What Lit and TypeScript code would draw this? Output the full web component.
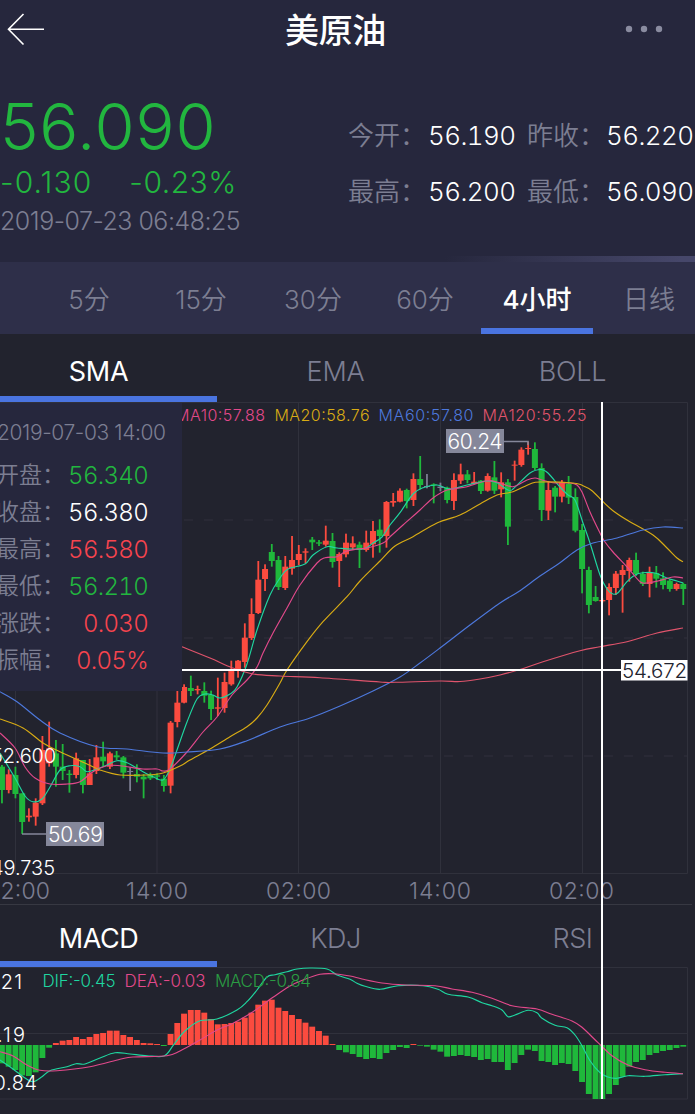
import { LitElement, html, svg, css } from "lit";
import { customElement, property } from "lit/decorators.js";
import { classMap } from "lit/directives/class-map.js";

const RED = "#fb4b3f";
const GREEN = "#1fb83b";
const GREY = "#7c7e92";
const TEAL = "#1fd6a0";
const PINK = "#e2498b";
const YELLOW = "#d9ac14";
const BLUE = "#4d78dc";
const ROSE = "#e0546c";

const STEP = 6.746;
const FIRST = 1.95;
const centre = (i: number) => FIRST + i * STEP;

// Each candle: colour, body top, body bottom, wick top, wick bottom, in thirds
// of a pixel below the run's own origin.
type Candle = [string, number, number, number, number];
const runs: { origin: number; rows: string }[] = [
  {
    origin: 670,
    rows: `g 290 360 285 400|r 313 360 298 370|g 315 372 290 385|g 370 456 370 492|r 437 442 415 455|r 398 440 385 467
|r 240 400 198 405|r 235 280 155 290|g 250 290 210 350|g 290 303 222 330|g 311 315 300 368|r 265 315 248 325
|g 270 345 270 370|r 310 345 267 345|r 262 303 225 312|g 260 274 215 288|r 250 290 245 297|g 256 262 243 270
|g 262 308 258 325|x 303 306 292 363|g 312 320 283 337|g 320 328 312 385|g 315 325 308 330|g 316 320 310 330
|g 326 348 315 365|r 158 347 153 370|r 98 156 62 172`,
  },
  {
    origin: 640,
    rows: `r 141 188 133 190|g 144 153 107 168|r 147 151 137 163|g 153 167 127 188|g 165 207 152 240|r 202 206 113 228
|r 126 204 98 218|r 90 133 62 137|r 62 93 60 113`,
  },
  {
    origin: 500,
    rows: `r 413 486 370 503|r 342 414 295 420|r 239 339 183 342|r 207 237 193 273|g 156 183 132 200|g 180 261 168 270
|r 200 264 168 270|r 180 206 108 224|r 162 180 135 195|r 154 158 145 190|g 119 127 111 150|g 127 131 120 138
|r 122 134 77 140|g 123 186 99 203|r 162 183 157 261|r 128 163 101 172|r 130 142 109 150|g 134 150 125 204
|r 128 150 92 155|r 93 133 63 173|g 89 108 58 158|r 6 108 3 143`,
  },
  {
    origin: 420,
    rows: `r 243 248 219 260|r 212 245 205 247|g 210 243 206 265|r 177 240 160 258|g 177 195 108 208|x 198 201 162 205
|g 193 196 190 250|x 200 204 188 214|g 203 240 200 250|r 180 243 160 270|r 163 182 131 192|g 163 180 150 190
|r 185 192 156 192|g 182 213 180 222|r 168 212 160 215|g 172 212 123 222|r 187 208 157 232|g 187 320 177 375
|r 134 137 122 182|r 89 135 82 140|r 84 87 65 104|g 87 144 67 150|g 144 270 130 303|r 210 272 183 300
|g 203 230 198 277|r 187 230 180 247|g 192 233 168 252|g 231 332 205 337|g 330 447 312 520|g 450 555 440 580
|g 531 543 498 545|r 540 544 535 548|r 501 540 490 586|r 461 504 453 525|r 450 465 435 578|r 420 453 413 485
|g 420 462 398 468|g 462 492 455 498|r 459 492 440 532|g 459 476 438 503|g 475 495 457 508|g 482 507 477 515
|r 492 507 488 512|g 492 507 488 555`,
  },
];
const candles: Candle[] = runs.flatMap(({ origin, rows }) =>
  rows.split("|").map((row) => {
    const [c, ...v] = row.trim().split(" ");
    return [c, ...v.map((n) => origin + Number(n) / 3)] as Candle;
  })
);

// Bar ends in thirds of a pixel below y = 900; 435 is the zero line.
const bars = [
  490, 500, 510, 526, 528, 517, 474, 443, 429, 422, 420, 411, 417, 411, 402, 399, 392, 392, 405, 411, 420, 429, 430,
  432, 438, 402, 369, 341, 330, 330, 338, 357, 373, 372, 369, 365, 353, 338, 314, 302, 299, 323, 333, 345, 357, 368,
  380, 393, 407, 432, 450, 457, 462, 471, 477, 474, 477, 459, 450, 441, 444, 432, 437, 440, 449, 455, 470, 468, 465,
  468, 471, 480, 477, 486, 486, 510, 489, 465, 449, 453, 483, 486, 495, 489, 492, 513, 546, 582, 597, 597, 582, 555,
  530, 500, 486, 480, 465, 459, 453, 450, 444, 440,
];

const ma5 = `0,753 15,778 25,796 33,801.7 42,799 50,787 60,770 70,765.7 80,766.7 87,771.7 97,769 107,765 117,760.7
127,762.7 140,770 153,776.7 163,780 170,769 177,750 187,722 197,699 205,694 213,695 220,698 230,694 237,687 247,664
257,630 270,595 280,578 288,569 305,564 313,555 327,546.7 337,548 363,549 373,543 382,537 390,525 400,512.7 413,494
423,487.7 437,485 450,489 467,485 487,481 497,482.7 508,490 513,489 530,473 541,469.5 548,473 560,487 568,495 575,500
583,523 590,543 600,575 607,589 613,594 618,592.7 627,581.7 635,575 643,572.7 655,573 667,578 677,581 683,583`;
const ma10 = `0,733 15,748 25,767 35,778 50,784 67,784 80,781.7 93,771.7 107,765.7 120,765.7 143,769 157,769 163,771
170,769 187,752 203,732 217,717 232,695 247,680 257,667 263,653 273,633 287,608 300,585 317,563 325,557.7 337,556.7
345,551.7 357,549 367,548 383,543 390,536.7 403,525 420,510 433,498 447,490 467,486.7 487,480.7 500,483 513,486.7
527,480 535,478 542,480 553,482.7 570,483 577,485 582,492 590,512 600,533 605,542 613,552 628,568 640,581.7 647,583
658,581 673,577 683,578`;
const ma20 = `0,719 23,728 43,743 60,751.7 87,764 100,770 120,775 147,775 163,773 180,766 190,760 210,749 230,736.7
247,726.7 257,718 267,705 280,683 287,670 307,641.7 323,621.7 347,596.7 360,581 380,561 395,546 413,536.7 437,523
460,515 480,504 497,495 513,491.7 530,484 540,482 573,483 583,485.7 592,490.7 603,501.7 613,510.7 627,520 653,535
667,548 677,558 683,561.7`;
const ma60 = `0,691.7 17,701.7 40,720 60,733 97,746.7 127,749 163,753 187,752 220,749 247,740.7 280,727 310,718 340,706
373,691 400,677 420,663 440,648 470,625 500,603 520,590.7 540,576 560,562.7 577,550 593,543 617,538 643,530 663,527
683,528`;
const ma120 = `182,646.7 210,658 232,667.7 253,674 280,676 320,677.7 380,682 395,682.3 440,681 460,681.5 480,679 500,675
520,669.5 543,661.7 580,650.7 600,646.7 627,641.7 657,633 683,628`;

const dif = `0,1060 13,1069 25,1078 33,1081.7 42,1076.7 50,1070.7 67,1066.7 76,1063.7 85,1064 100,1058 115,1052.7 130,1054
147,1055.7 164,1056 173,1045.7 182,1034 190,1026.7 200,1020.7 217,1019 237,1010 247,1001.7 257,990 267,977 275,974.7
287,971.7 297,969 310,968 327,969 337,975 350,979.3 357,983.3 365,986.3 380,989.3 398,985.7 423,985.7 438,989.3
448,994.3 468,997 482,1002.7 492,1005.7 502,1010 508,1016.7 515,1015 528,1010.3 537,1012.7 542,1018.3 555,1025.3
567,1027.7 575,1035 582,1045.7 590,1060.7 600,1072.7 607,1076.7 617,1078.3 628,1075.7 645,1076.3 665,1074.7
683,1073.7`;
const dea = `0,1051.7 13,1056 27,1065 40,1070.3 57,1070.7 90,1066.7 120,1059.3 133,1057 167,1055.7 180,1051 200,1040
217,1030 233,1023.3 253,1011.7 273,997.3 290,986 303,980 320,974.3 333,973.7 350,976 362,979 382,983 405,985 435,985.7
452,989 472,992.3 492,998.3 512,1005.7 537,1009 552,1014.3 572,1021 582,1027.3 598,1042.7 612,1055.7 628,1065
645,1069.7 665,1072.3 683,1073.7`;

/** Catmull-Rom path through the points. */
function curve(points: string): string {
  const p = points.trim().split(/\s+/).map((s) => s.split(",").map(Number));
  let d = `M${p[0][0]} ${p[0][1]}`;
  for (let i = 0; i < p.length - 1; i++) {
    const a = p[Math.max(i - 1, 0)], b = p[i], c = p[i + 1], e = p[Math.min(i + 2, p.length - 1)];
    d += `C${b[0] + (c[0] - a[0]) / 6} ${b[1] + (c[1] - a[1]) / 6} ${c[0] - (e[0] - b[0]) / 6} ${c[1] - (e[1] - b[1]) / 6} ${c[0]} ${c[1]}`;
  }
  return d;
}

const line = (points: string, color: string) =>
  svg`<path d=${curve(points)} fill="none" stroke=${color} stroke-width="1.15"/>`;

const label = (x: number, y: number, size: number, color: string, length: number, value: string) =>
  svg`<text x=${x} y=${y} font-size=${size} fill=${color} textLength=${length}>${value}</text>`;

const colorOf: Record<string, string> = { r: RED, g: GREEN, x: GREY };

@customElement("tab-strip")
class TabStrip extends LitElement {
  @property({ type: Array }) items: string[] = [];
  @property({ type: Number }) active = 0;

  static styles = css`
    :host { display: block; overflow: hidden; }
    .row { display: flex; height: 100%; margin-left: var(--inset, 0px); }
    .tab {
      flex: 0 0 var(--tab, 112px);
      display: flex;
      align-items: center;
      justify-content: center;
      box-sizing: border-box;
      padding-top: var(--drop, 5px);
      border-bottom: 6px solid transparent;
      font-size: var(--size, 26px);
      letter-spacing: var(--track, 0);
      color: #7c7e92;
      white-space: nowrap;
    }
    .on { color: #fff; font-weight: var(--on-weight, 400); border-bottom-color: #4a74e0; }
  `;

  render() {
    return html`<div class="row">
      ${this.items.map((t, i) => html`<div class=${classMap({ tab: true, on: i === this.active })}>${t}</div>`)}
    </div>`;
  }
}

@customElement("app-root")
class AppRoot extends LitElement {
  static styles = css`
    :host {
      display: block;
      position: relative;
      height: 1114px;
      overflow: hidden;
      background: #22232e;
      font-family: Inter, "Noto Sans CJK SC", sans-serif;
      font-weight: 350;
      color: #fff;
    }
    .head { background: #26273d; height: 262px; display: flex; flex-direction: column; }
    .bar { display: grid; grid-template-columns: 1fr auto 1fr; align-items: center; height: 60px; width: 671px; }
    .title { font-size: 34px; font-weight: 500; line-height: 58px; letter-spacing: -0.4px; padding-top: 2px; }
    .back { margin-left: 7px; }
    .more { justify-self: end; margin: 0 7px 1px 0; }
    .quote { display: flex; justify-content: space-between; width: 695px; height: 196px; }
    .last { display: flex; flex-direction: column; color: #22b63f; white-space: nowrap; padding-top: 31px; width: 260px; }
    .price { font-size: 65px; line-height: 72px; letter-spacing: 0.8px; font-weight: 300; }
    .change {
      display: flex;
      gap: 37px;
      font-size: 30px;
      line-height: 36px;
      padding-top: 1px;
      letter-spacing: 1.1px;
      font-weight: 300;
    }
    .change :last-child { letter-spacing: 0.5px; }
    .time { color: #7c7e92; font-size: 25px; line-height: 30px; padding-top: 6px; letter-spacing: -0.5px; }
    .stats {
      display: grid;
      grid-template-columns: 80px 99px 79px 88px;
      grid-auto-rows: 56px;
      align-items: center;
      padding: 47px 1px 0 0;
      font-size: 26px;
      color: #7c7e92;
      white-space: nowrap;
    }
    .stats span { padding-bottom: 4px; }
    .stats b { color: #fff; font-weight: 350; letter-spacing: -0.6px; font-variant-numeric: tabular-nums; }
    .sheen { height: 6px; background: linear-gradient(90deg, #26273d 64%, #46476a 98%); }
    .periods { height: 72px; background: #2e2f49; --inset: 33px; --tab: 112px; --on-weight: 500; --drop: 4px; }
    .overlays { height: 68px; --inset: -20px; --tab: 237px; --size: 27px; --drop: 12px; --track: -0.2px; }
    .subs { height: 62px; --inset: -20px; --tab: 237px; --size: 27px; --drop: 11px; --track: -0.5px; }
    svg { display: block; }
    .chart { flex: none; }
    .tip {
      position: absolute;
      left: 0;
      top: 403px;
      width: 182px;
      height: 288px;
      background: #26273d;
      color: #7c7e92;
      white-space: nowrap;
    }
    .when { font-size: 21px; line-height: 30px; margin: 15px 0 9px -3px; letter-spacing: -0.4px; }
    .fact { display: flex; justify-content: space-between; height: 37px; line-height: 37px; font-size: 23px; width: 152px; margin-left: -4px; }
    .num { font-size: 24px; letter-spacing: -0.7px; font-variant-numeric: tabular-nums; }
    .up { color: #f7444e; }
    .down { color: #22b63f; }
    .flat { color: #fff; }
    .cross { position: absolute; left: 0; top: 0; pointer-events: none; }
  `;

  private facts = [
    ["开盘", "56.340", "down"],
    ["收盘", "56.380", "flat"],
    ["最高", "56.580", "up"],
    ["最低", "56.210", "down"],
    ["涨跌", "0.030", "up"],
    ["振幅", "0.05%", "up"],
  ];

  private stats = [
    ["今开", "56.190"],
    ["昨收", "56.220"],
    ["最高", "56.200"],
    ["最低", "56.090"],
  ];

  private priceChart() {
    return html`<svg class="chart" width="695" height="503" viewBox="0 402 695 503">
      <g stroke="#30313c" fill="none">
        <path d="M0 402.5H687.5V873.5H0M15.5 402V873M157 402V873M298.5 402V873M440.5 402V873M582.5 402V873" />
        <path d="M4 520H687M4 638H687M4 756H687" stroke-dasharray="9 11" />
        <path d="M0 904.5H692" stroke="#373842" />
      </g>
      ${candles.map(([c, top, bottom, high, low], i) => {
        const x = centre(i);
        return svg`<g fill=${colorOf[c]}>
          <rect x=${x - 0.9} y=${high} width="1.8" height=${low - high}/>
          <rect x=${x - 3} y=${top} width="6" height=${bottom - top}/>
        </g>`;
      })}
      ${line(ma5, TEAL)}${line(ma10, PINK)}${line(ma20, YELLOW)}${line(ma60, BLUE)}${line(ma120, ROSE)}
      ${label(175, 420.5, 16, PINK, 90, "MA10:57.88")}
      ${label(274.5, 420.5, 16, YELLOW, 95, "MA20:58.76")}
      ${label(378.5, 420.5, 16, BLUE, 95, "MA60:57.80")}
      ${label(482.5, 420.5, 16, ROSE, 104, "MA120:55.25")}
      <path d="M504 441.5H528V445M22 834H46" fill="none" stroke="#85879a" stroke-width="1.6" />
      <path d="M446 429H504V453H446ZM46 822H104V846H46Z" fill="#85879a" />
      ${label(447.5, 448.5, 21, "#fff", 55, "60.24")}
      ${label(48, 841.5, 21, "#fff", 55, "50.69")}
      ${label(-9, 763, 20, "#fff", 65, "52.600")}
      ${label(-9, 875, 20, "#fff", 64, "49.735")}
      ${label(-14, 899, 23, GREY, 64, "02:00")}
      ${label(126, 899, 23, GREY, 62, "14:00")}
      ${label(266, 899, 23, GREY, 65, "02:00")}
      ${label(409, 899, 23, GREY, 62, "14:00")}
      ${label(549, 899, 23, GREY, 65, "02:00")}
    </svg>`;
  }

  private macdChart() {
    return html`<svg class="chart" width="695" height="147" viewBox="0 967 695 147">
      <path d="M0 967.5H687.5V1099H0M0 1033.5H687" stroke="#30313c" fill="none" />
      ${bars.map((v, i) => {
        const h = Math.abs(v - 435) / 3;
        return svg`<rect x=${centre(i) - 3} y=${v < 435 ? 1045 - h : 1045} width="5.9" height=${h} fill=${v < 435 ? RED : GREEN}/>`;
      })}
      ${line(dif, TEAL)}${line(dea, PINK)}
      ${label(42.5, 987, 17, TEAL, 73, "DIF:-0.45")}
      ${label(124.5, 987, 17, PINK, 81, "DEA:-0.03")}
      ${label(215, 987, 17, "#2a9d43", 96, "MACD:-0.84")}
      ${label(-15, 989, 20, "#fff", 37, "1.21")}
      ${label(-17, 1042, 20, "#fff", 42, "0.19")}
      ${label(-16, 1090, 20, "#fff", 53, "-0.84")}
    </svg>`;
  }

  render() {
    return html`
      <header class="head">
        <div class="bar">
          <svg class="back" width="38" height="34" viewBox="7 13 38 34" fill="none" stroke="#fff" stroke-width="1.6">
            <path d="M23.5 14L8.5 29.3L23.5 44.5M8.5 29.3H44" />
          </svg>
          <span class="title">美原油</span>
          <svg class="more" width="40" height="10" viewBox="0 0 40 10" fill="#8a8ca0">
            <circle cx="5" cy="4" r="3.2" /><circle cx="20" cy="4" r="3.2" /><circle cx="35" cy="4" r="3.2" />
          </svg>
        </div>
        <div class="quote">
          <div class="last">
            <span class="price">56.090</span>
            <span class="change"><span>-0.130</span><span>-0.23%</span></span>
            <span class="time">2019-07-23 06:48:25</span>
          </div>
          <div class="stats">${this.stats.map(([k, v]) => html`<span>${k}：</span><b>${v}</b>`)}</div>
        </div>
        <div class="sheen"></div>
      </header>
      <tab-strip class="periods" .items=${["5分", "15分", "30分", "60分", "4小时", "日线"]} .active=${4}></tab-strip>
      <tab-strip class="overlays" .items=${["SMA", "EMA", "BOLL"]}></tab-strip>
      ${this.priceChart()}
      <tab-strip class="subs" .items=${["MACD", "KDJ", "RSI"]}></tab-strip>
      ${this.macdChart()}
      <aside class="tip">
        <div class="when">2019-07-03 14:00</div>
        ${this.facts.map(([k, v, c]) => html`<div class="fact"><span>${k}：</span><span class="num ${c}">${v}</span></div>`)}
      </aside>
      <svg class="cross" width="695" height="1114">
        <path d="M602 402V1099M182 670H621" stroke="#fff" stroke-width="2" />
        <rect x="621" y="660" width="66.500" height="20.500" fill="#fff" />
        ${label(622, 678, 20.5, "#22232e", 65, "54.672")}
      </svg>
    `;
  }
}
